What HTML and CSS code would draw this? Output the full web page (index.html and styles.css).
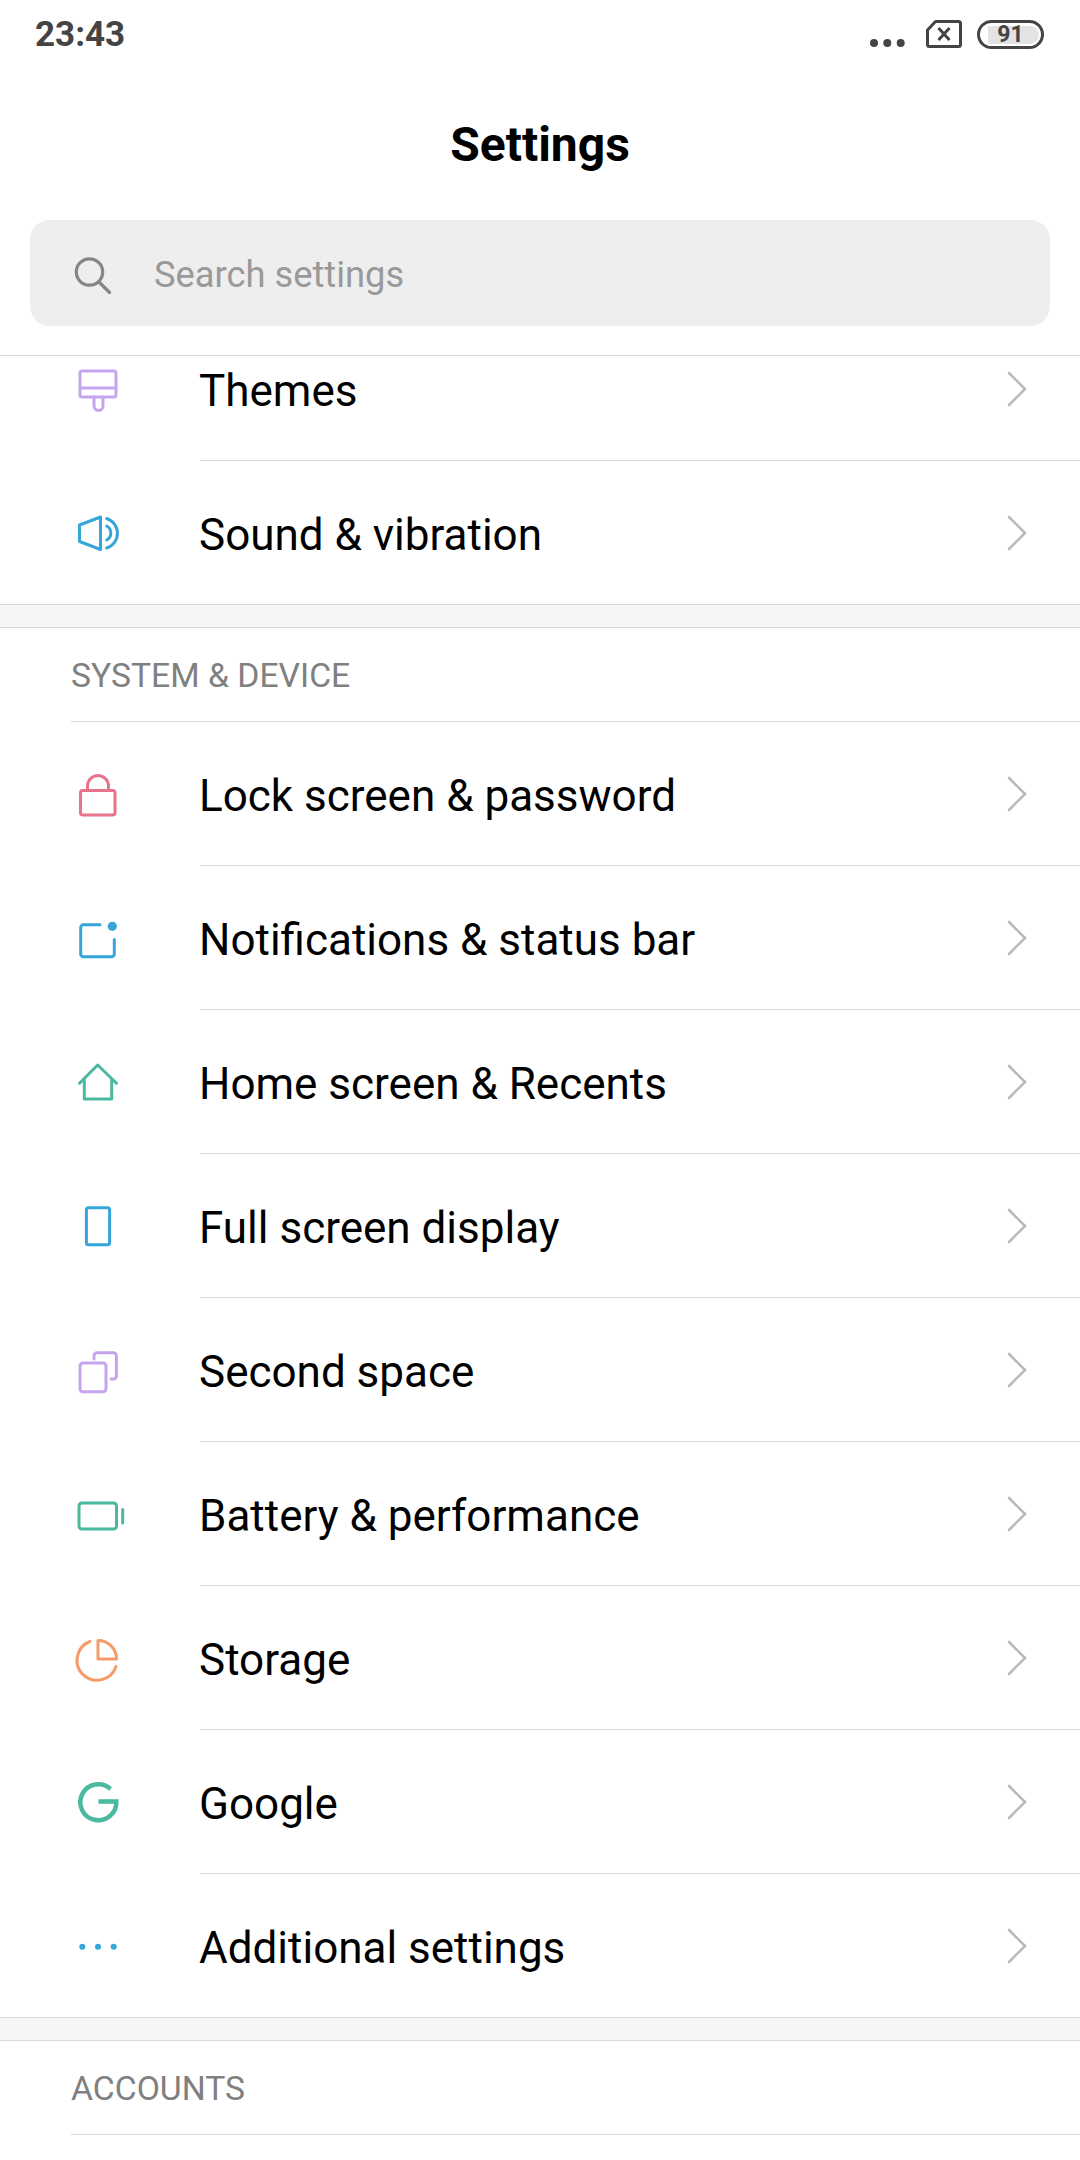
FILE: index.html
```html
<!DOCTYPE html>
<html lang="en">
<head>
    <meta charset="UTF-8">
    <meta name="viewport" content="width=device-width, initial-scale=1.0">
    <title>Settings</title>
    <link rel="stylesheet" href="styles.css">
</head>
<body>
    <div class="screen">
        <header class="top">
            <div class="status-bar">
                <span class="clock">23:43</span>
                <div class="status-icons">
                    <svg class="status-dots" viewBox="0 0 38 10" width="38" height="10">
                        <circle cx="6" cy="5" r="4"/>
                        <circle cx="19.3" cy="5" r="4"/>
                        <circle cx="32.7" cy="5" r="4"/>
                    </svg>
                    <svg class="status-sim" viewBox="0 0 36 28" width="36" height="28">
                        <path d="M9.5 1.5 H32.5 a2 2 0 0 1 2 2 V24.5 a2 2 0 0 1 -2 2 H3.5 a2 2 0 0 1 -2 -2 V10 Z"/>
                        <path d="M12.5 8 L23.5 20 M23.5 8 L12.5 20"/>
                    </svg>
                    <div class="battery"><span class="battery-level">91</span></div>
                </div>
            </div>
            <h1 class="page-title">Settings</h1>
            <div class="search-box">
                <svg class="search-icon" viewBox="0 0 40 40" width="40" height="40">
                    <circle cx="16.5" cy="18" r="13.2"/>
                    <path d="M26 28 L36.5 38.5"/>
                </svg>
                <span class="search-text">Search settings</span>
            </div>
        </header>

        <div class="scroll-area">
            <div class="scroll-content">
                <div class="group">
                    <div class="row">
                        <svg class="icon purple" viewBox="0 0 48 48">
                            <rect x="6" y="6" width="36" height="26" rx="2"/>
                            <path d="M6 23 H42 M20 32 V41 a4.5 4.5 0 0 0 9 0 V32"/>
                        </svg>
                        <div class="row-body">
                            <span class="row-label">Themes</span>
                            <svg class="chevron" viewBox="0 0 20 36"><path d="M2 2 L18 18 L2 34"/></svg>
                        </div>
                    </div>
                    <div class="row">
                        <svg class="icon blue" viewBox="0 0 48 48">
                            <path d="M26.5 8 V40.5 L5.5 32.5 V16 Z"/>
                            <path d="M32.7 9.5 A15.5 15.5 0 0 1 32.7 39 M32.7 17 A8 8 0 0 1 32.7 31"/>
                        </svg>
                        <div class="row-body">
                            <span class="row-label">Sound &amp; vibration</span>
                            <svg class="chevron" viewBox="0 0 20 36"><path d="M2 2 L18 18 L2 34"/></svg>
                        </div>
                    </div>
                </div>

                <div class="gap"></div>

                <div class="section-title"><span>SYSTEM &amp; DEVICE</span></div>
                <div class="group">
                    <div class="row">
                        <svg class="icon red" viewBox="0 0 48 48">
                            <rect x="6.5" y="20.5" width="34.5" height="24.5" rx="2.5"/>
                            <path d="M13.5 20 V16 a10.5 10.5 0 0 1 21 0 V20"/>
                        </svg>
                        <div class="row-body">
                            <span class="row-label">Lock screen &amp; password</span>
                            <svg class="chevron" viewBox="0 0 20 36"><path d="M2 2 L18 18 L2 34"/></svg>
                        </div>
                    </div>
                    <div class="row">
                        <svg class="icon blue" viewBox="0 0 48 48">
                            <path d="M26 10.7 H9.5 a2.8 2.8 0 0 0 -2.8 2.8 V40 a2.8 2.8 0 0 0 2.8 2.8 H37.5 a2.8 2.8 0 0 0 2.8 -2.8 V25.5"/>
                            <circle class="solid" cx="38.3" cy="12.3" r="4.6"/>
                        </svg>
                        <div class="row-body">
                            <span class="row-label">Notifications &amp; status bar</span>
                            <svg class="chevron" viewBox="0 0 20 36"><path d="M2 2 L18 18 L2 34"/></svg>
                        </div>
                    </div>
                    <div class="row">
                        <svg class="icon teal" viewBox="0 0 48 48">
                            <path d="M5.5 25.3 L23.7 7 L42.5 25.3 M10.3 20.5 V41 H37.7 V20.5"/>
                        </svg>
                        <div class="row-body">
                            <span class="row-label">Home screen &amp; Recents</span>
                            <svg class="chevron" viewBox="0 0 20 36"><path d="M2 2 L18 18 L2 34"/></svg>
                        </div>
                    </div>
                    <div class="row">
                        <svg class="icon blue" viewBox="0 0 48 48">
                            <rect x="12.4" y="5.7" width="23.2" height="37" rx="2"/>
                        </svg>
                        <div class="row-body">
                            <span class="row-label">Full screen display</span>
                            <svg class="chevron" viewBox="0 0 20 36"><path d="M2 2 L18 18 L2 34"/></svg>
                        </div>
                    </div>
                    <div class="row">
                        <svg class="icon purple" viewBox="0 0 48 48">
                            <rect x="6" y="17" width="26" height="28.7" rx="3"/>
                            <path d="M20 13 V9.7 a3 3 0 0 1 3 -3 H39.4 a3 3 0 0 1 3 3 V30 a3 3 0 0 1 -3 3 H37"/>
                        </svg>
                        <div class="row-body">
                            <span class="row-label">Second space</span>
                            <svg class="chevron" viewBox="0 0 20 36"><path d="M2 2 L18 18 L2 34"/></svg>
                        </div>
                    </div>
                    <div class="row">
                        <svg class="icon teal" viewBox="0 0 48 48">
                            <rect x="5" y="13" width="37.5" height="26" rx="3"/>
                            <path d="M48.7 19.5 V33"/>
                        </svg>
                        <div class="row-body">
                            <span class="row-label">Battery &amp; performance</span>
                            <svg class="chevron" viewBox="0 0 20 36"><path d="M2 2 L18 18 L2 34"/></svg>
                        </div>
                    </div>
                    <div class="row">
                        <svg class="icon orange" viewBox="0 0 48 48">
                            <path d="M16 7.5 A20 20 0 1 0 42 32.5"/>
                            <path d="M24 6.5 V25 H42.5 A18.5 18.5 0 0 0 24 6.5 Z"/>
                        </svg>
                        <div class="row-body">
                            <span class="row-label">Storage</span>
                            <svg class="chevron" viewBox="0 0 20 36"><path d="M2 2 L18 18 L2 34"/></svg>
                        </div>
                    </div>
                    <div class="row">
                        <svg class="icon teal thick" viewBox="0 0 48 48">
                            <path d="M24.5 23.5 H42.3 A18 18 0 1 1 36.5 11"/>
                        </svg>
                        <div class="row-body">
                            <span class="row-label">Google</span>
                            <svg class="chevron" viewBox="0 0 20 36"><path d="M2 2 L18 18 L2 34"/></svg>
                        </div>
                    </div>
                    <div class="row">
                        <svg class="icon blue" viewBox="0 0 48 48">
                            <circle class="solid" cx="8.3" cy="24.7" r="3"/>
                            <circle class="solid" cx="24" cy="24.7" r="3"/>
                            <circle class="solid" cx="39.7" cy="24.7" r="3"/>
                        </svg>
                        <div class="row-body">
                            <span class="row-label">Additional settings</span>
                            <svg class="chevron" viewBox="0 0 20 36"><path d="M2 2 L18 18 L2 34"/></svg>
                        </div>
                    </div>
                </div>

                <div class="gap"></div>

                <div class="section-title"><span>ACCOUNTS</span></div>
            </div>
        </div>
    </div>
</body>
</html>
```

FILE: styles.css
```css
body {
    margin: 0;
    background-color: #fff;
    font-family: Roboto, "Liberation Sans", sans-serif;
}

.screen {
    display: flex;
    flex-direction: column;
    height: 2160px;
    overflow: hidden;
}

/* top part, does not scroll */
.top {
    flex: none;
    padding-bottom: 29px;
    border-bottom: 1px solid #d9d9d9;
}

.status-bar {
    display: flex;
    justify-content: space-between;
    align-items: center;
    height: 68px;
    padding: 0 36px 0 35px;
}

.clock {
    margin-top: 1px;
    font-size: 35px;
    font-weight: 700;
    color: #444;
}

.status-icons {
    display: flex;
    align-items: center;
}

.status-dots {
    fill: #444;
    margin: 18px 20px 0 0;
}

.status-sim {
    fill: none;
    stroke: #444;
    stroke-width: 3;
    stroke-linejoin: round;
    margin-right: 15px;
}

.battery {
    display: flex;
    justify-content: flex-end;
    box-sizing: border-box;
    width: 67px;
    height: 29px;
    padding: 3px 2px 2px 8px;
    border: 3px solid #444;
    border-radius: 15px;
}

.battery-level {
    flex: 1;
    padding-right: 6px;
    border-radius: 0 9px 9px 0;
    background-color: #e3e3e3;
    color: #444;
    font-size: 23px;
    font-weight: 700;
    line-height: 18px;
    text-align: center;
}

.page-title {
    margin: 0;
    height: 152px;
    font-size: 48px;
    font-weight: 700;
    line-height: 154px;
    text-align: center;
    color: #000;
}

.search-box {
    display: flex;
    align-items: center;
    gap: 43px;
    height: 106px;
    margin: 0 30px;
    padding-left: 43px;
    background-color: #eee;
    border-radius: 20px;
}

.search-icon {
    margin-top: 1px;
    fill: none;
    stroke: #858585;
    stroke-width: 3.2;
    stroke-linecap: round;
}

.search-text {
    margin: 3px 0 0 -2px;
    font-size: 36.3px;
    color: #999;
}

/* the list is scrolled a bit, first row is cut by the header */
.scroll-area {
    flex: 1;
    overflow: hidden;
}

.scroll-content {
    margin-top: -39px;
}

.row {
    display: flex;
    align-items: center;
    height: 144px;
}

.row:last-child {
    height: 143px;
}

.row-body {
    display: flex;
    justify-content: space-between;
    align-items: center;
    flex: 1;
    box-sizing: border-box;
    height: 100%;
    margin-left: 78px;
    padding-right: 53px;
    border-bottom: 1px solid #d9d9d9;
}

.row:last-child .row-body {
    border-bottom: none;
}

.row-label {
    margin: 5px 0 0 -1px;
    font-size: 44px;
    color: #000;
}

.icon {
    flex: none;
    width: 48px;
    height: 48px;
    margin-left: 74px;
    overflow: visible;
    fill: none;
    stroke: currentColor;
    stroke-width: 3;
    stroke-linecap: round;
    stroke-linejoin: round;
}

.icon .solid {
    fill: currentColor;
    stroke: none;
}

.icon.thick {
    stroke-width: 4.5;
    stroke-linecap: butt;
    stroke-linejoin: miter;
}

.purple { color: #c6a5ef; }
.blue { color: #35a5da; }
.red { color: #e8738a; }
.teal { color: #4bb8a0; }
.orange { color: #f59b68; }

.chevron {
    flex: none;
    width: 20px;
    height: 36px;
    fill: none;
    stroke: #bababa;
    stroke-width: 2.6;
    stroke-linecap: round;
    stroke-linejoin: round;
}

.gap {
    height: 22px;
    background-color: #f6f6f6;
    border-top: 1px solid #d9d9d9;
    border-bottom: 1px solid #d9d9d9;
}

.section-title {
    display: flex;
    align-items: center;
    box-sizing: border-box;
    height: 94px;
    margin-left: 71px;
    padding-top: 1px;
    border-bottom: 1px solid #d9d9d9;
    font-size: 33.7px;
    color: #808080;
}
```
